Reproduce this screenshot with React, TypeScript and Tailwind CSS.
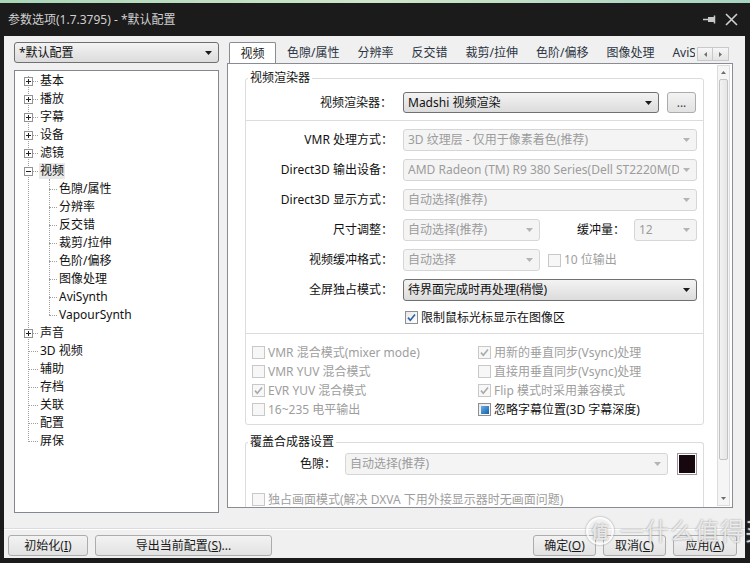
import React from "react";

const FONT = "font-['Noto_Sans','Noto_Sans_CJK_SC',sans-serif]";

type TreeRow =
  | { kind: "root"; text: string; box?: "plus" | "minus"; selected?: boolean }
  | { kind: "child"; text: string };

const TREE: TreeRow[] = [
  { kind: "root", text: "基本", box: "plus" },
  { kind: "root", text: "播放", box: "plus" },
  { kind: "root", text: "字幕", box: "plus" },
  { kind: "root", text: "设备", box: "plus" },
  { kind: "root", text: "滤镜", box: "plus" },
  { kind: "root", text: "视频", box: "minus", selected: true },
  { kind: "child", text: "色隙/属性" },
  { kind: "child", text: "分辨率" },
  { kind: "child", text: "反交错" },
  { kind: "child", text: "裁剪/拉伸" },
  { kind: "child", text: "色阶/偏移" },
  { kind: "child", text: "图像处理" },
  { kind: "child", text: "AviSynth" },
  { kind: "child", text: "VapourSynth" },
  { kind: "root", text: "声音", box: "plus" },
  { kind: "root", text: "3D 视频" },
  { kind: "root", text: "辅助" },
  { kind: "root", text: "存档" },
  { kind: "root", text: "关联" },
  { kind: "root", text: "配置" },
  { kind: "root", text: "屏保" },
];

const TABS = ["色隙/属性", "分辨率", "反交错", "裁剪/拉伸", "色阶/偏移", "图像处理", "AviSynth"];

function Arrow({ color }: { color: string }) {
  return (
    <svg width="7" height="4" viewBox="0 0 7 4" className="shrink-0">
      <path d="M0 0H7L3.5 4Z" fill={color} />
    </svg>
  );
}

function Combo({
  text,
  w,
  h = "h-[22px]",
  enabled = false,
}: {
  text: string;
  w: string;
  h?: string;
  enabled?: boolean;
}) {
  return (
    <div
      className={`flex ${w} ${h} shrink-0 items-center gap-[4px] rounded-[3px] border pl-[4px] pr-[6px] text-[12px] ${
        enabled
          ? "border-[#707070] bg-linear-to-b from-[#f3f3f3] to-[#dcdcdc] text-[#111]"
          : "border-[#d6d6d6] bg-[#f4f4f4] text-[#9c9c9c]"
      }`}
    >
      <span className="min-w-0 flex-1 overflow-hidden whitespace-nowrap">{text}</span>
      <Arrow color={enabled ? "#1a1a1a" : "#b4b4b4"} />
    </div>
  );
}

function Check({
  state = "off",
  disabled = false,
}: {
  state?: "off" | "on" | "mixed";
  disabled?: boolean;
}) {
  return (
    <span
      className={`inline-flex h-[13px] w-[13px] shrink-0 items-center justify-center border ${
        disabled
          ? "border-[#c8c8c8] bg-[#f7f7f7]"
          : "border-[#8e8f8f] bg-linear-to-br from-[#e8e8e8] to-white"
      }`}
    >
      {state === "on" && (
        <svg width="11" height="11" viewBox="0 0 11 11">
          <path
            d="M2 5.6L4.3 8.2L9 2.6"
            fill="none"
            stroke={disabled ? "#a9a9a9" : "#2d5fa8"}
            strokeWidth="1.6"
          />
        </svg>
      )}
      {state === "mixed" && (
        <span className="h-[8px] w-[8px] bg-linear-to-br from-[#62b0ea] to-[#1b5ea6]" />
      )}
    </span>
  );
}

function CheckItem({
  label,
  state,
  disabled = true,
}: {
  label: string;
  state?: "off" | "on" | "mixed";
  disabled?: boolean;
}) {
  return (
    <div className="flex h-[19px] items-center gap-[3px]">
      <Check state={state} disabled={disabled} />
      <span
        className={`whitespace-nowrap text-[12px] ${disabled ? "text-[#9e9e9e]" : "text-[#111]"}`}
      >
        {label}
      </span>
    </div>
  );
}

function Button({ w, children }: { w: string; children: React.ReactNode }) {
  return (
    <div
      className={`flex ${w} h-[21px] items-center justify-center rounded-[3px] border border-[#acacac] bg-linear-to-b from-[#f3f3f3] to-[#e2e2e2] text-[12px] text-[#1a1a1a]`}
    >
      {children}
    </div>
  );
}

function TreeBox({ kind }: { kind: "plus" | "minus" }) {
  return (
    <span className="relative z-10 flex h-[9px] w-[9px] items-center justify-center border border-[#939393] bg-white">
      <svg width="7" height="7" viewBox="0 0 7 7">
        <path d="M1 3.5H6" stroke="#222" strokeWidth="1" />
        {kind === "plus" && <path d="M3.5 1V6" stroke="#222" strokeWidth="1" />}
      </svg>
    </span>
  );
}

function Tree() {
  return (
    <div className="relative mt-[7px] h-[443px] border border-[#828790] bg-white pt-[1px] text-[12px] leading-none text-[#111]">
      <div className="absolute left-[13px] top-[5px] h-[366px] border-l border-dotted border-[#a0a0a0]" />
      <div className="absolute left-[34px] top-[108px] h-[136px] border-l border-dotted border-[#a0a0a0]" />
      {TREE.map((row, i) =>
        row.kind === "root" ? (
          <div key={i} className="relative flex h-[18px] items-center">
            {row.box ? (
              <>
                <span className="ml-[9px]">
                  <TreeBox kind={row.box} />
                </span>
                <span className="w-[5px] border-t border-dotted border-[#a0a0a0]" />
              </>
            ) : (
              <span className="ml-[13px] w-[10px] border-t border-dotted border-[#a0a0a0]" />
            )}
            <span
              className={`ml-[1px] px-[1px] py-[2px] ${row.selected ? "bg-[#e8e8e8]" : ""}`}
            >
              {row.text}
            </span>
          </div>
        ) : (
          <div key={i} className="flex h-[18px] items-center">
            <span className="ml-[34px] w-[8px] border-t border-dotted border-[#a0a0a0]" />
            <span className="ml-[2px]">{row.text}</span>
          </div>
        )
      )}
    </div>
  );
}

function Legend({ children }: { children: React.ReactNode }) {
  return (
    <span className="absolute left-[2px] top-[-9px] bg-white px-[2px] text-[12px] leading-[16px] text-[#111]">
      {children}
    </span>
  );
}

function VideoPanel() {
  return (
    <div className="flex h-[445px] w-[506px] border border-[#898c95] bg-white">
      <div className="h-full flex-1 overflow-hidden pl-[17px]">
        {/* 视频渲染器 group */}
        <div className="relative mt-[14px] w-[459px] rounded-[3px] border border-[#dcdcdc] pb-[5px]">
          <Legend>视频渲染器</Legend>

          <div className="mt-[13px] flex items-center">
            <span className="w-[147px] pr-[1px] text-right text-[12px] text-[#111]">视频渲染器：</span>
            <div className="ml-[10px] flex items-center gap-[8px]">
              <Combo text="Madshi 视频渲染" w="w-[256px]" h="h-[21px]" enabled />
              <Button w="w-[29px]">
                <span className="text-[#444]">...</span>
              </Button>
            </div>
          </div>

          <div className="mt-[7px] h-px bg-[#dcdcdc]" />

          <div className="mt-[8px] flex flex-col gap-[8px] text-[12px] text-[#111]">
            <div className="flex items-center">
              <span className="w-[147px] text-right">VMR 处理方式：</span>
              <div className="ml-[10px]">
                <Combo text="3D 纹理层 - 仅用于像素着色(推荐)" w="w-[294px]" />
              </div>
            </div>
            <div className="flex items-center">
              <span className="w-[147px] text-right">Direct3D 输出设备：</span>
              <div className="ml-[10px]">
                <Combo text="AMD Radeon (TM) R9 380 Series(Dell ST2220M(Digital))" w="w-[294px]" />
              </div>
            </div>
            <div className="flex items-center">
              <span className="w-[147px] text-right">Direct3D 显示方式：</span>
              <div className="ml-[10px]">
                <Combo text="自动选择(推荐)" w="w-[294px]" />
              </div>
            </div>
            <div className="flex items-center">
              <span className="w-[147px] text-right">尺寸调整：</span>
              <div className="ml-[10px]">
                <Combo text="自动选择(推荐)" w="w-[137px]" />
              </div>
              <span className="w-[85px] text-right">缓冲量：</span>
              <div className="ml-[9px]">
                <Combo text="12" w="w-[63px]" />
              </div>
            </div>
            <div className="flex items-center">
              <span className="w-[147px] text-right">视频缓冲格式：</span>
              <div className="ml-[10px]">
                <Combo text="自动选择" w="w-[137px]" />
              </div>
              <div className="ml-[8px]">
                <CheckItem label="10 位输出" />
              </div>
            </div>
            <div className="flex items-center">
              <span className="w-[147px] text-right">全屏独占模式：</span>
              <div className="ml-[10px]">
                <Combo text="待界面完成时再处理(稍慢)" w="w-[294px]" enabled />
              </div>
            </div>
          </div>

          <div className="mt-[7px] pl-[159px]">
            <CheckItem label="限制鼠标光标显示在图像区" state="on" disabled={false} />
          </div>

          <div className="mt-[6px] h-px bg-[#dcdcdc]" />

          <div className="mt-[9px] grid grid-cols-[226px_1fr] pl-[6px]">
            <CheckItem label="VMR 混合模式(mixer mode)" />
            <CheckItem label="用新的垂直同步(Vsync)处理" state="on" />
            <CheckItem label="VMR YUV 混合模式" />
            <CheckItem label="直接用垂直同步(Vsync)处理" />
            <CheckItem label="EVR YUV 混合模式" state="on" />
            <CheckItem label="Flip 模式时采用兼容模式" state="on" />
            <CheckItem label="16~235 电平输出" />
            <CheckItem label="忽略字幕位置(3D 字幕深度)" state="mixed" disabled={false} />
          </div>
        </div>

        {/* 覆盖合成器设置 group */}
        <div className="relative mt-[17px] h-[80px] w-[459px] rounded-t-[3px] border border-b-0 border-[#dcdcdc]">
          <Legend>覆盖合成器设置</Legend>
          <div className="mt-[10px] flex items-center text-[12px] text-[#111]">
            <span className="w-[90px] text-right">色隙：</span>
            <div className="ml-[9px]">
              <Combo text="自动选择(推荐)" w="w-[323px]" />
            </div>
            <div className="ml-[9px] h-[22px] w-[20px] border border-[#9a9a9a] bg-[#17070f] shadow-[inset_0_0_0_1px_#ffffff]" />
          </div>
          <div className="mt-[15px] pl-[6px]">
            <CheckItem label="独占画面模式(解决 DXVA 下用外接显示器时无画面问题)" />
          </div>
        </div>
      </div>

      {/* scrollbar */}
      <div className="mr-[2px] mt-[1px] mb-[1px] flex w-[13px] flex-col border border-[#dcdcdc] bg-[#f5f5f5]">
        <div className="flex h-[13px] items-center justify-center">
          <svg width="5" height="3" viewBox="0 0 5 3">
            <path d="M0 3H5L2.5 0Z" fill="#6d6d6d" />
          </svg>
        </div>
        <div className="mx-px h-[381px] rounded-[2px] border border-[#c2c2c2] bg-linear-to-r from-[#f2f2f2] to-[#e6e6e6]" />
        <div className="flex-1" />
        <div className="flex h-[13px] items-center justify-center">
          <svg width="5" height="3" viewBox="0 0 5 3">
            <path d="M0 0H5L2.5 3Z" fill="#6d6d6d" />
          </svg>
        </div>
      </div>
    </div>
  );
}

export default function App() {
  return (
    <div className={`relative h-[563px] w-[750px] overflow-hidden bg-[#1b1b1b] ${FONT} leading-[16px]`}>
      {/* desktop strip above window */}
      <div className="h-[3px] bg-linear-to-r from-[#a9d6b8] via-[#cfe6c9] to-[#a6d4c2]" />

      {/* title bar */}
      <div className="flex h-[33px] items-center justify-between pl-[8px] pr-[12px]">
        <span className="text-[12px] text-[#cfcfcf]">参数选项(1.7.3795) - *默认配置</span>
        <div className="flex items-center gap-[9px]">
          <svg width="13" height="9" viewBox="0 0 13 9">
            <path d="M0 4.5H5" stroke="#c8c8c8" strokeWidth="1.5" />
            <rect x="5" y="2" width="6" height="5" fill="#c8c8c8" />
            <path d="M11.5 0.5V8.5" stroke="#c8c8c8" strokeWidth="1.5" />
          </svg>
          <svg width="13" height="13" viewBox="0 0 13 13">
            <path d="M1 1L12 12M12 1L1 12" stroke="#d0d0d0" strokeWidth="1.6" />
          </svg>
        </div>
      </div>

      {/* window body */}
      <div className="ml-[4px] flex h-[522px] w-[741px] flex-col bg-[#f0f0f0] text-[#111]">
        <div className="flex pt-[6px]">
          {/* left column */}
          <div className="ml-[10px] w-[205px]">
            <Combo text="*默认配置" w="w-[205px]" h="h-[21px]" enabled />
            <Tree />
          </div>

          {/* right column */}
          <div className="ml-[8px] flex flex-col">
            <div className="relative flex h-[21px] w-[506px] items-end text-[12px]">
              <div className="flex w-[468px] items-end overflow-hidden">
                <div className="relative z-10 -mb-px ml-[2px] flex h-[22px] w-[47px] shrink-0 items-center justify-center rounded-t-[2px] border border-b-0 border-[#898c95] bg-white text-[#1a1a1a]">
                  视频
                </div>
                <div className="ml-[2px] flex h-[21px] items-center">
                  {TABS.map((t) => (
                    <span key={t} className="whitespace-nowrap px-[9px] text-[#2b3442]">
                      {t}
                    </span>
                  ))}
                </div>
              </div>
              <div className="mb-[2px] ml-[2px] flex">
                <div className="flex h-[14px] w-[16px] items-center justify-center border border-[#c9c9c9] bg-linear-to-b from-[#f6f6f6] to-[#e4e4e4]">
                  <svg width="3" height="5" viewBox="0 0 3 5">
                    <path d="M3 0V5L0 2.5Z" fill="#707070" />
                  </svg>
                </div>
                <div className="flex h-[14px] w-[16px] items-center justify-center border border-l-0 border-[#c9c9c9] bg-linear-to-b from-[#f6f6f6] to-[#e4e4e4]">
                  <svg width="3" height="5" viewBox="0 0 3 5">
                    <path d="M0 0V5L3 2.5Z" fill="#707070" />
                  </svg>
                </div>
              </div>
            </div>
            <VideoPanel />
          </div>
        </div>

        {/* bottom buttons */}
        <div className="mt-[15px] border-t border-[#dcdcdc] shadow-[inset_0_1px_0_#ffffff]">
          <div className="flex items-center justify-between pl-[4px] pr-[8px] pt-[6px]">
            <div className="flex gap-[7px]">
              <Button w="w-[80px]">
                初始化(<span className="underline">I</span>)
              </Button>
              <Button w="w-[177px]">
                导出当前配置(<span className="underline">S</span>)...
              </Button>
            </div>
            <div className="flex gap-[7px]">
              <Button w="w-[63px]">
                确定(<span className="underline">O</span>)
              </Button>
              <Button w="w-[63px]">
                取消(<span className="underline">C</span>)
              </Button>
              <Button w="w-[64px]">
                应用(<span className="underline">A</span>)
              </Button>
            </div>
          </div>
        </div>
      </div>

      {/* site watermark */}
      <div className="pointer-events-none absolute left-[586px] top-[517px] flex items-center gap-[6px] text-white/75 [text-shadow:0_0_2px_#8a8a8a]">
        <span className="flex h-[28px] w-[28px] items-center justify-center rounded-full border-2 border-white/75 text-[17px] font-bold leading-none shadow-[0_0_2px_#8a8a8a]">
          值
        </span>
        <span className="whitespace-nowrap text-[24px] leading-none tracking-[1px]">一什么值得买</span>
      </div>
    </div>
  );
}
